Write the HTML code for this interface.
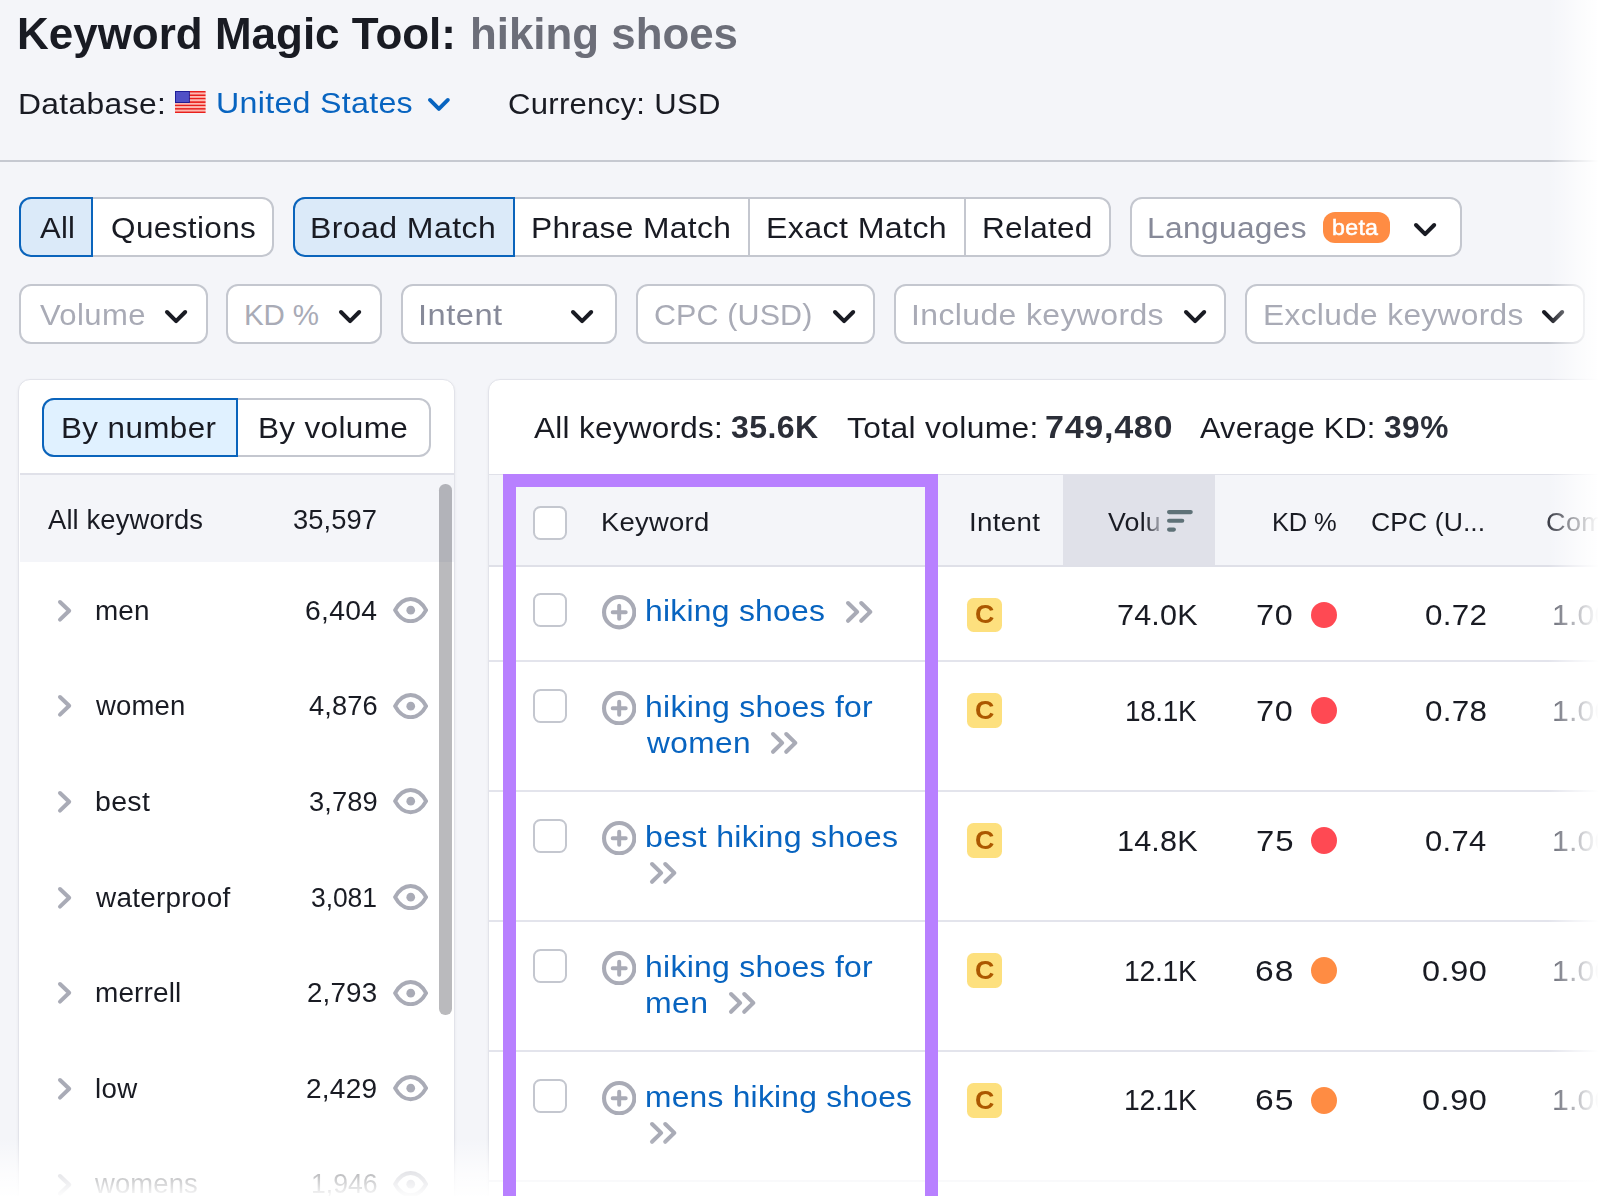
<!DOCTYPE html>
<html lang="en"><head><meta charset="utf-8"><title>Keyword Magic Tool: hiking shoes</title>
<style>
html,body{margin:0;padding:0;}
body{width:1600px;height:1196px;overflow:hidden;background:#f4f5f9;position:relative;font-family:"Liberation Sans", Arial, sans-serif;}
.a{position:absolute;}
.t{position:absolute;white-space:pre;line-height:1;margin:0;padding:0;transform-origin:0 0;}
</style></head><body>
<svg class="a" style="left:175.2px;top:91px" width="30.6" height="22.2" viewBox="0 0 30.6 22.2"><rect x="0" y="0.000" width="30.6" height="1.758" fill="#e9201c"/><rect x="0" y="1.708" width="30.6" height="1.758" fill="#ffb9b0"/><rect x="0" y="3.415" width="30.6" height="1.758" fill="#e9201c"/><rect x="0" y="5.123" width="30.6" height="1.758" fill="#ffb9b0"/><rect x="0" y="6.831" width="30.6" height="1.758" fill="#e9201c"/><rect x="0" y="8.538" width="30.6" height="1.758" fill="#ffb9b0"/><rect x="0" y="10.246" width="30.6" height="1.758" fill="#e9201c"/><rect x="0" y="11.954" width="30.6" height="1.758" fill="#ffb9b0"/><rect x="0" y="13.662" width="30.6" height="1.758" fill="#e9201c"/><rect x="0" y="15.369" width="30.6" height="1.758" fill="#ffb9b0"/><rect x="0" y="17.077" width="30.6" height="1.758" fill="#e9201c"/><rect x="0" y="18.785" width="30.6" height="1.758" fill="#ffb9b0"/><rect x="0" y="20.492" width="30.6" height="1.758" fill="#e9201c"/><rect x="0" y="0" width="14.84" height="11.95" fill="#1a1a96"/><rect x="0.9" y="0.9" width="13.04" height="10.15" fill="#5050c6"/></svg>
<svg class="a" style="left:428.00px;top:97.50px;overflow:visible" width="21.8" height="12.8" viewBox="0 0 21.8 12.8"><path d="M1.95 1.95 L10.9 10.850000000000001 L19.85 1.95" fill="none" stroke="#0864c0" stroke-width="3.9" stroke-linecap="round" stroke-linejoin="round"/></svg>
<div class="a" style="left:0px;top:160px;width:1600px;height:2px;background:#c6c9d1;"></div>
<div class="a" style="left:19px;top:197px;width:255px;height:60px;background:#fff;border:2px solid #c4c7cf;box-sizing:border-box;border-radius:12px;"></div>
<div class="a" style="left:19px;top:197px;width:74px;height:60px;background:#dbeaf9;border:2px solid #0a64bc;box-sizing:border-box;border-radius:12px 0 0 12px;"></div>
<div class="a" style="left:293px;top:197px;width:818px;height:60px;background:#fff;border:2px solid #c4c7cf;box-sizing:border-box;border-radius:12px;"></div>
<div class="a" style="left:293px;top:197px;width:222px;height:60px;background:#dbeaf9;border:2px solid #0a64bc;box-sizing:border-box;border-radius:12px 0 0 12px;"></div>
<div class="a" style="left:748px;top:199px;width:2px;height:56px;background:#c4c7cf;"></div>
<div class="a" style="left:964px;top:199px;width:2px;height:56px;background:#c4c7cf;"></div>
<div class="a" style="left:1130px;top:197px;width:332px;height:60px;background:#fff;border:2px solid #c4c7cf;box-sizing:border-box;border-radius:12px;"></div>
<div class="a" style="left:1323px;top:212px;width:67px;height:31px;background:#ff8c43;border-radius:12px;"></div>
<svg class="a" style="left:1413.60px;top:223.10px;overflow:visible" width="22.2" height="13.1" viewBox="0 0 22.2 13.1"><path d="M2.0 2.0 L11.1 11.1 L20.2 2.0" fill="none" stroke="#191b23" stroke-width="4.0" stroke-linecap="round" stroke-linejoin="round"/></svg>
<div class="a" style="left:19px;top:284px;width:189px;height:60px;background:#fff;border:2px solid #c4c7cf;box-sizing:border-box;border-radius:12px;"></div>
<svg class="a" style="left:164.70px;top:309.90px;overflow:visible" width="22.2" height="13.1" viewBox="0 0 22.2 13.1"><path d="M2.0 2.0 L11.1 11.1 L20.2 2.0" fill="none" stroke="#191b23" stroke-width="4.0" stroke-linecap="round" stroke-linejoin="round"/></svg>
<div class="a" style="left:226px;top:284px;width:156px;height:60px;background:#fff;border:2px solid #c4c7cf;box-sizing:border-box;border-radius:12px;"></div>
<svg class="a" style="left:339.30px;top:309.90px;overflow:visible" width="22.2" height="13.1" viewBox="0 0 22.2 13.1"><path d="M2.0 2.0 L11.1 11.1 L20.2 2.0" fill="none" stroke="#191b23" stroke-width="4.0" stroke-linecap="round" stroke-linejoin="round"/></svg>
<div class="a" style="left:401px;top:284px;width:216px;height:60px;background:#fff;border:2px solid #c4c7cf;box-sizing:border-box;border-radius:12px;"></div>
<svg class="a" style="left:570.50px;top:309.90px;overflow:visible" width="22.2" height="13.1" viewBox="0 0 22.2 13.1"><path d="M2.0 2.0 L11.1 11.1 L20.2 2.0" fill="none" stroke="#191b23" stroke-width="4.0" stroke-linecap="round" stroke-linejoin="round"/></svg>
<div class="a" style="left:636px;top:284px;width:239px;height:60px;background:#fff;border:2px solid #c4c7cf;box-sizing:border-box;border-radius:12px;"></div>
<svg class="a" style="left:832.60px;top:309.90px;overflow:visible" width="22.2" height="13.1" viewBox="0 0 22.2 13.1"><path d="M2.0 2.0 L11.1 11.1 L20.2 2.0" fill="none" stroke="#191b23" stroke-width="4.0" stroke-linecap="round" stroke-linejoin="round"/></svg>
<div class="a" style="left:894px;top:284px;width:332px;height:60px;background:#fff;border:2px solid #c4c7cf;box-sizing:border-box;border-radius:12px;"></div>
<svg class="a" style="left:1183.60px;top:309.90px;overflow:visible" width="22.2" height="13.1" viewBox="0 0 22.2 13.1"><path d="M2.0 2.0 L11.1 11.1 L20.2 2.0" fill="none" stroke="#191b23" stroke-width="4.0" stroke-linecap="round" stroke-linejoin="round"/></svg>
<div class="a" style="left:1245px;top:284px;width:340px;height:60px;background:#fff;border:2px solid #c4c7cf;box-sizing:border-box;border-radius:12px;"></div>
<svg class="a" style="left:1542.00px;top:309.90px;overflow:visible" width="22.2" height="13.1" viewBox="0 0 22.2 13.1"><path d="M2.0 2.0 L11.1 11.1 L20.2 2.0" fill="none" stroke="#191b23" stroke-width="4.0" stroke-linecap="round" stroke-linejoin="round"/></svg>
<div class="a" style="left:18px;top:379px;width:437px;height:921px;background:#fff;border:1px solid #e2e3ea;box-sizing:border-box;border-radius:12px;box-shadow:0 1px 3px rgba(25,27,35,0.06);"></div>
<div class="a" style="left:42px;top:398px;width:389px;height:59px;background:#fff;border:2px solid #c4c7cf;box-sizing:border-box;border-radius:12px;"></div>
<div class="a" style="left:42px;top:398px;width:196px;height:59px;background:#e0f1ff;border:2px solid #0a64bc;box-sizing:border-box;border-radius:12px 0 0 12px;"></div>
<div class="a" style="left:20px;top:473px;width:434px;height:2px;background:#e0e1e9;"></div>
<div class="a" style="left:20px;top:475px;width:434px;height:87px;background:#f4f5f9;"></div>
<svg class="a" style="left:58.05px;top:599.60px;overflow:visible" width="13.2" height="21.6" viewBox="0 0 13.2 21.6"><path d="M2.0 2.0 L11.2 10.8 L2.0 19.6" fill="none" stroke="#a9abb6" stroke-width="4.0" stroke-linecap="round" stroke-linejoin="round"/></svg>
<svg class="a" style="left:392.80px;top:597.00px" width="35.2" height="26.2" viewBox="0 0 35.2 26.2"><path d="M2.1 13.1 C6.2 5.6 11.6 2 17.6 2 C23.6 2 29 5.6 33.1 13.1 C29 20.6 23.6 24.2 17.6 24.2 C11.6 24.2 6.2 20.6 2.1 13.1 Z" fill="none" stroke="#a9abb6" stroke-width="4" stroke-linejoin="round"/><circle cx="17.75" cy="13.2" r="4.35" fill="#a9abb6"/></svg>
<svg class="a" style="left:58.05px;top:695.27px;overflow:visible" width="13.2" height="21.6" viewBox="0 0 13.2 21.6"><path d="M2.0 2.0 L11.2 10.8 L2.0 19.6" fill="none" stroke="#a9abb6" stroke-width="4.0" stroke-linecap="round" stroke-linejoin="round"/></svg>
<svg class="a" style="left:392.80px;top:692.67px" width="35.2" height="26.2" viewBox="0 0 35.2 26.2"><path d="M2.1 13.1 C6.2 5.6 11.6 2 17.6 2 C23.6 2 29 5.6 33.1 13.1 C29 20.6 23.6 24.2 17.6 24.2 C11.6 24.2 6.2 20.6 2.1 13.1 Z" fill="none" stroke="#a9abb6" stroke-width="4" stroke-linejoin="round"/><circle cx="17.75" cy="13.2" r="4.35" fill="#a9abb6"/></svg>
<svg class="a" style="left:58.05px;top:790.94px;overflow:visible" width="13.2" height="21.6" viewBox="0 0 13.2 21.6"><path d="M2.0 2.0 L11.2 10.8 L2.0 19.6" fill="none" stroke="#a9abb6" stroke-width="4.0" stroke-linecap="round" stroke-linejoin="round"/></svg>
<svg class="a" style="left:392.80px;top:788.34px" width="35.2" height="26.2" viewBox="0 0 35.2 26.2"><path d="M2.1 13.1 C6.2 5.6 11.6 2 17.6 2 C23.6 2 29 5.6 33.1 13.1 C29 20.6 23.6 24.2 17.6 24.2 C11.6 24.2 6.2 20.6 2.1 13.1 Z" fill="none" stroke="#a9abb6" stroke-width="4" stroke-linejoin="round"/><circle cx="17.75" cy="13.2" r="4.35" fill="#a9abb6"/></svg>
<svg class="a" style="left:58.05px;top:886.61px;overflow:visible" width="13.2" height="21.6" viewBox="0 0 13.2 21.6"><path d="M2.0 2.0 L11.2 10.8 L2.0 19.6" fill="none" stroke="#a9abb6" stroke-width="4.0" stroke-linecap="round" stroke-linejoin="round"/></svg>
<svg class="a" style="left:392.80px;top:884.01px" width="35.2" height="26.2" viewBox="0 0 35.2 26.2"><path d="M2.1 13.1 C6.2 5.6 11.6 2 17.6 2 C23.6 2 29 5.6 33.1 13.1 C29 20.6 23.6 24.2 17.6 24.2 C11.6 24.2 6.2 20.6 2.1 13.1 Z" fill="none" stroke="#a9abb6" stroke-width="4" stroke-linejoin="round"/><circle cx="17.75" cy="13.2" r="4.35" fill="#a9abb6"/></svg>
<svg class="a" style="left:58.05px;top:982.28px;overflow:visible" width="13.2" height="21.6" viewBox="0 0 13.2 21.6"><path d="M2.0 2.0 L11.2 10.8 L2.0 19.6" fill="none" stroke="#a9abb6" stroke-width="4.0" stroke-linecap="round" stroke-linejoin="round"/></svg>
<svg class="a" style="left:392.80px;top:979.68px" width="35.2" height="26.2" viewBox="0 0 35.2 26.2"><path d="M2.1 13.1 C6.2 5.6 11.6 2 17.6 2 C23.6 2 29 5.6 33.1 13.1 C29 20.6 23.6 24.2 17.6 24.2 C11.6 24.2 6.2 20.6 2.1 13.1 Z" fill="none" stroke="#a9abb6" stroke-width="4" stroke-linejoin="round"/><circle cx="17.75" cy="13.2" r="4.35" fill="#a9abb6"/></svg>
<svg class="a" style="left:58.05px;top:1077.95px;overflow:visible" width="13.2" height="21.6" viewBox="0 0 13.2 21.6"><path d="M2.0 2.0 L11.2 10.8 L2.0 19.6" fill="none" stroke="#a9abb6" stroke-width="4.0" stroke-linecap="round" stroke-linejoin="round"/></svg>
<svg class="a" style="left:392.80px;top:1075.35px" width="35.2" height="26.2" viewBox="0 0 35.2 26.2"><path d="M2.1 13.1 C6.2 5.6 11.6 2 17.6 2 C23.6 2 29 5.6 33.1 13.1 C29 20.6 23.6 24.2 17.6 24.2 C11.6 24.2 6.2 20.6 2.1 13.1 Z" fill="none" stroke="#a9abb6" stroke-width="4" stroke-linejoin="round"/><circle cx="17.75" cy="13.2" r="4.35" fill="#a9abb6"/></svg>
<svg class="a" style="left:58.05px;top:1173.62px;overflow:visible" width="13.2" height="21.6" viewBox="0 0 13.2 21.6"><path d="M2.0 2.0 L11.2 10.8 L2.0 19.6" fill="none" stroke="#a9abb6" stroke-width="4.0" stroke-linecap="round" stroke-linejoin="round"/></svg>
<svg class="a" style="left:392.80px;top:1171.02px" width="35.2" height="26.2" viewBox="0 0 35.2 26.2"><path d="M2.1 13.1 C6.2 5.6 11.6 2 17.6 2 C23.6 2 29 5.6 33.1 13.1 C29 20.6 23.6 24.2 17.6 24.2 C11.6 24.2 6.2 20.6 2.1 13.1 Z" fill="none" stroke="#a9abb6" stroke-width="4" stroke-linejoin="round"/><circle cx="17.75" cy="13.2" r="4.35" fill="#a9abb6"/></svg>
<div class="a" style="left:439px;top:484px;width:13px;height:531px;background:rgba(25,27,35,0.3);border-radius:6.25px;"></div>
<div class="a" style="left:488px;top:379px;width:1212px;height:921px;background:#fff;border:1px solid #e2e3ea;box-sizing:border-box;border-radius:12px;box-shadow:0 1px 3px rgba(25,27,35,0.06);"></div>
<div class="a" style="left:489px;top:474px;width:1111px;height:92px;background:#f4f5f9;"></div>
<div class="a" style="left:489px;top:474px;width:1111px;height:1px;background:#e0e1e9;"></div>
<div class="a" style="left:1063px;top:475px;width:152px;height:90px;background:#e0e1e9;"></div>
<div class="a" style="left:489px;top:565px;width:1111px;height:2px;background:#dfe0e8;"></div>
<svg class="a" style="left:1167.10px;top:510.20px" width="26" height="22" viewBox="0 0 26 22"><g stroke="#5f7278" stroke-width="4.1" stroke-linecap="round"><path d="M2.05 2.1 H23.75"/><path d="M2.05 10.8 H15.25"/><path d="M2.05 19.6 H6.85"/></g></svg>
<div class="a" style="left:533px;top:506px;width:34px;height:34px;background:#fff;border:2px solid #c4c7cf;box-sizing:border-box;border-radius:7.5px;"></div>
<div class="a" style="left:533px;top:593px;width:34px;height:34px;background:#fff;border:2px solid #c4c7cf;box-sizing:border-box;border-radius:7.5px;"></div>
<svg class="a" style="left:602.00px;top:595.20px" width="34.4" height="34.4" viewBox="0 0 34.4 34.4"><circle cx="17.2" cy="17.2" r="15.149999999999999" fill="none" stroke="#a9abb6" stroke-width="4.1"/><path d="M17.2 10.7 V23.7 M10.7 17.2 H23.7" stroke="#a9abb6" stroke-width="4" stroke-linecap="round" fill="none"/></svg>
<svg class="a" style="left:846.30px;top:600.50px;overflow:visible" width="26.4" height="21.8" viewBox="0 0 26.4 21.8"><path d="M2.05 2.05 L11.149999999999999 10.9 L2.05 19.75 M15.25 2.05 L24.349999999999998 10.9 L15.25 19.75" fill="none" stroke="#a9abb6" stroke-width="4.1" stroke-linecap="round" stroke-linejoin="round"/></svg>
<div class="a" style="left:967px;top:598px;width:35px;height:34px;background:#fde07e;border-radius:6.5px;"></div>
<div class="a" style="left:1311px;top:602px;width:26px;height:26px;background:#ff4953;border-radius:50%;"></div>
<div class="a" style="left:489px;top:660px;width:1111px;height:2px;background:#e3e4ec;"></div>
<div class="a" style="left:533px;top:689px;width:34px;height:34px;background:#fff;border:2px solid #c4c7cf;box-sizing:border-box;border-radius:7.5px;"></div>
<svg class="a" style="left:602.00px;top:690.70px" width="34.4" height="34.4" viewBox="0 0 34.4 34.4"><circle cx="17.2" cy="17.2" r="15.149999999999999" fill="none" stroke="#a9abb6" stroke-width="4.1"/><path d="M17.2 10.7 V23.7 M10.7 17.2 H23.7" stroke="#a9abb6" stroke-width="4" stroke-linecap="round" fill="none"/></svg>
<svg class="a" style="left:771.10px;top:732.40px;overflow:visible" width="26.4" height="21.8" viewBox="0 0 26.4 21.8"><path d="M2.05 2.05 L11.149999999999999 10.9 L2.05 19.75 M15.25 2.05 L24.349999999999998 10.9 L15.25 19.75" fill="none" stroke="#a9abb6" stroke-width="4.1" stroke-linecap="round" stroke-linejoin="round"/></svg>
<div class="a" style="left:967px;top:693px;width:35px;height:35px;background:#fde07e;border-radius:6.5px;"></div>
<div class="a" style="left:1311px;top:697px;width:26px;height:27px;background:#ff4953;border-radius:50%;"></div>
<div class="a" style="left:489px;top:790px;width:1111px;height:2px;background:#e3e4ec;"></div>
<div class="a" style="left:533px;top:819px;width:34px;height:34px;background:#fff;border:2px solid #c4c7cf;box-sizing:border-box;border-radius:7.5px;"></div>
<svg class="a" style="left:602.00px;top:820.70px" width="34.4" height="34.4" viewBox="0 0 34.4 34.4"><circle cx="17.2" cy="17.2" r="15.149999999999999" fill="none" stroke="#a9abb6" stroke-width="4.1"/><path d="M17.2 10.7 V23.7 M10.7 17.2 H23.7" stroke="#a9abb6" stroke-width="4" stroke-linecap="round" fill="none"/></svg>
<svg class="a" style="left:649.70px;top:862.40px;overflow:visible" width="26.4" height="21.8" viewBox="0 0 26.4 21.8"><path d="M2.05 2.05 L11.149999999999999 10.9 L2.05 19.75 M15.25 2.05 L24.349999999999998 10.9 L15.25 19.75" fill="none" stroke="#a9abb6" stroke-width="4.1" stroke-linecap="round" stroke-linejoin="round"/></svg>
<div class="a" style="left:967px;top:823px;width:35px;height:35px;background:#fde07e;border-radius:6.5px;"></div>
<div class="a" style="left:1311px;top:827px;width:26px;height:27px;background:#ff4953;border-radius:50%;"></div>
<div class="a" style="left:489px;top:920px;width:1111px;height:2px;background:#e3e4ec;"></div>
<div class="a" style="left:533px;top:949px;width:34px;height:34px;background:#fff;border:2px solid #c4c7cf;box-sizing:border-box;border-radius:7.5px;"></div>
<svg class="a" style="left:602.00px;top:950.70px" width="34.4" height="34.4" viewBox="0 0 34.4 34.4"><circle cx="17.2" cy="17.2" r="15.149999999999999" fill="none" stroke="#a9abb6" stroke-width="4.1"/><path d="M17.2 10.7 V23.7 M10.7 17.2 H23.7" stroke="#a9abb6" stroke-width="4" stroke-linecap="round" fill="none"/></svg>
<svg class="a" style="left:728.60px;top:992.40px;overflow:visible" width="26.4" height="21.8" viewBox="0 0 26.4 21.8"><path d="M2.05 2.05 L11.149999999999999 10.9 L2.05 19.75 M15.25 2.05 L24.349999999999998 10.9 L15.25 19.75" fill="none" stroke="#a9abb6" stroke-width="4.1" stroke-linecap="round" stroke-linejoin="round"/></svg>
<div class="a" style="left:967px;top:953px;width:35px;height:35px;background:#fde07e;border-radius:6.5px;"></div>
<div class="a" style="left:1311px;top:957px;width:26px;height:27px;background:#ff8c43;border-radius:50%;"></div>
<div class="a" style="left:489px;top:1050px;width:1111px;height:2px;background:#e3e4ec;"></div>
<div class="a" style="left:533px;top:1079px;width:34px;height:34px;background:#fff;border:2px solid #c4c7cf;box-sizing:border-box;border-radius:7.5px;"></div>
<svg class="a" style="left:602.00px;top:1080.70px" width="34.4" height="34.4" viewBox="0 0 34.4 34.4"><circle cx="17.2" cy="17.2" r="15.149999999999999" fill="none" stroke="#a9abb6" stroke-width="4.1"/><path d="M17.2 10.7 V23.7 M10.7 17.2 H23.7" stroke="#a9abb6" stroke-width="4" stroke-linecap="round" fill="none"/></svg>
<svg class="a" style="left:649.70px;top:1122.40px;overflow:visible" width="26.4" height="21.8" viewBox="0 0 26.4 21.8"><path d="M2.05 2.05 L11.149999999999999 10.9 L2.05 19.75 M15.25 2.05 L24.349999999999998 10.9 L15.25 19.75" fill="none" stroke="#a9abb6" stroke-width="4.1" stroke-linecap="round" stroke-linejoin="round"/></svg>
<div class="a" style="left:967px;top:1083px;width:35px;height:35px;background:#fde07e;border-radius:6.5px;"></div>
<div class="a" style="left:1311px;top:1087px;width:26px;height:27px;background:#ff8c43;border-radius:50%;"></div>
<div class="a" style="left:489px;top:1180px;width:1111px;height:2px;background:#e3e4ec;"></div>
<span class="t" style="left:17.20px;top:12.58px;font-size:43.5px;color:#191b23;font-weight:700;letter-spacing:0.014px;transform:scaleX(1.0104);">Keyword Magic Tool:</span>
<span class="t" style="left:470.03px;top:12.58px;font-size:43.5px;color:#6c6e79;font-weight:700;letter-spacing:0.008px;transform:scaleX(1.0074);">hiking shoes</span>
<span class="t" style="left:18.16px;top:89.03px;font-size:29.5px;color:#191b23;letter-spacing:0.302px;transform:scaleX(1.0795);">Database:</span>
<span class="t" style="left:215.80px;top:88.44px;font-size:30.2px;color:#0864c0;letter-spacing:0.282px;transform:scaleX(1.0654);">United States</span>
<span class="t" style="left:507.84px;top:89.03px;font-size:29.5px;color:#191b23;letter-spacing:0.274px;transform:scaleX(1.0530);">Currency: USD</span>
<span class="t" style="left:39.84px;top:213.03px;font-size:29.5px;color:#191b23;letter-spacing:0.251px;transform:scaleX(1.0519);">All</span>
<span class="t" style="left:110.82px;top:213.03px;font-size:29.5px;color:#191b23;letter-spacing:0.348px;transform:scaleX(1.0682);">Questions</span>
<span class="t" style="left:309.88px;top:213.03px;font-size:29.5px;color:#191b23;letter-spacing:0.379px;transform:scaleX(1.0857);">Broad Match</span>
<span class="t" style="left:531.02px;top:213.03px;font-size:29.5px;color:#191b23;letter-spacing:0.333px;transform:scaleX(1.0765);">Phrase Match</span>
<span class="t" style="left:765.61px;top:213.03px;font-size:29.5px;color:#191b23;letter-spacing:0.372px;transform:scaleX(1.0885);">Exact Match</span>
<span class="t" style="left:981.84px;top:213.03px;font-size:29.5px;color:#191b23;letter-spacing:0.259px;transform:scaleX(1.0694);">Related</span>
<span class="t" style="left:1146.82px;top:213.03px;font-size:29.5px;color:#878a99;letter-spacing:0.353px;transform:scaleX(1.0727);">Languages</span>
<span class="t" style="left:1332.33px;top:216.55px;font-size:21.8px;color:#fff;letter-spacing:0.274px;transform:scaleX(1.0643);-webkit-text-stroke:0.5px #fff;">beta</span>
<span class="t" style="left:39.83px;top:300.03px;font-size:29.5px;color:#a9abb6;letter-spacing:0.355px;transform:scaleX(1.0521);">Volume</span>
<span class="t" style="left:244.08px;top:300.03px;font-size:29.5px;color:#a9abb6;letter-spacing:-0.145px;">KD %</span>
<span class="t" style="left:417.78px;top:300.03px;font-size:29.5px;color:#878a99;letter-spacing:0.428px;transform:scaleX(1.1076);">Intent</span>
<span class="t" style="left:653.80px;top:300.03px;font-size:29.5px;color:#a9abb6;letter-spacing:0.137px;transform:scaleX(1.0315);">CPC (USD)</span>
<span class="t" style="left:910.81px;top:300.03px;font-size:29.5px;color:#a9abb6;letter-spacing:0.352px;transform:scaleX(1.0830);">Include keywords</span>
<span class="t" style="left:1262.82px;top:300.03px;font-size:29.5px;color:#a9abb6;letter-spacing:0.328px;transform:scaleX(1.0730);">Exclude keywords</span>
<span class="t" style="left:61.29px;top:412.83px;font-size:29.5px;color:#191b23;letter-spacing:0.357px;transform:scaleX(1.0649);">By number</span>
<span class="t" style="left:258.43px;top:412.83px;font-size:29.5px;color:#191b23;letter-spacing:0.315px;transform:scaleX(1.0679);">By volume</span>
<span class="t" style="left:47.97px;top:506.71px;font-size:26.8px;color:#191b23;letter-spacing:0.124px;transform:scaleX(1.0217);">All keywords</span>
<span class="t" style="left:292.98px;top:506.71px;font-size:26.8px;color:#191b23;letter-spacing:0.100px;transform:scaleX(1.0191);">35,597</span>
<span class="t" style="left:95.08px;top:598.21px;font-size:26.8px;color:#191b23;letter-spacing:0.132px;transform:scaleX(1.0404);">men</span>
<span class="t" style="left:304.94px;top:598.21px;font-size:26.8px;color:#191b23;letter-spacing:0.293px;transform:scaleX(1.0570);">6,404</span>
<span class="t" style="left:96.07px;top:692.88px;font-size:26.8px;color:#191b23;letter-spacing:0.178px;transform:scaleX(1.0259);">women</span>
<span class="t" style="left:308.78px;top:692.88px;font-size:26.8px;color:#191b23;letter-spacing:0.095px;transform:scaleX(1.0178);">4,876</span>
<span class="t" style="left:95.03px;top:788.55px;font-size:26.8px;color:#191b23;letter-spacing:0.318px;transform:scaleX(1.0625);">best</span>
<span class="t" style="left:308.78px;top:788.55px;font-size:26.8px;color:#191b23;letter-spacing:0.095px;transform:scaleX(1.0178);">3,789</span>
<span class="t" style="left:96.04px;top:885.22px;font-size:26.8px;color:#191b23;letter-spacing:0.252px;transform:scaleX(1.0412);">waterproof</span>
<span class="t" style="left:311.01px;top:885.22px;font-size:26.8px;color:#191b23;letter-spacing:-0.067px;transform:scaleX(0.9879);">3,081</span>
<span class="t" style="left:95.07px;top:979.89px;font-size:26.8px;color:#191b23;letter-spacing:0.114px;transform:scaleX(1.0437);">merrell</span>
<span class="t" style="left:307.47px;top:979.89px;font-size:26.8px;color:#191b23;letter-spacing:0.149px;transform:scaleX(1.0359);">2,793</span>
<span class="t" style="left:95.05px;top:1075.56px;font-size:26.8px;color:#191b23;letter-spacing:0.297px;transform:scaleX(1.0328);">low</span>
<span class="t" style="left:305.95px;top:1075.56px;font-size:26.8px;color:#191b23;letter-spacing:0.236px;transform:scaleX(1.0455);">2,429</span>
<span class="t" style="left:95.27px;top:1171.23px;font-size:26.8px;color:#191b23;letter-spacing:0.142px;transform:scaleX(1.0223);">womens</span>
<span class="t" style="left:310.50px;top:1171.23px;font-size:26.8px;color:#191b23;letter-spacing:-0.035px;transform:scaleX(0.9936);">1,946</span>
<span class="t" style="left:534.02px;top:412.83px;font-size:29.5px;color:#191b23;letter-spacing:0.281px;transform:scaleX(1.0659);">All keywords:</span>
<span class="t" style="left:730.58px;top:411.90px;font-size:30.6px;color:#2b2e38;font-weight:700;letter-spacing:0.402px;transform:scaleX(1.0470);">35.6K</span>
<span class="t" style="left:846.81px;top:412.83px;font-size:29.5px;color:#191b23;letter-spacing:0.319px;transform:scaleX(1.0774);">Total volume:</span>
<span class="t" style="left:1044.62px;top:411.90px;font-size:30.6px;color:#2b2e38;font-weight:700;letter-spacing:0.620px;transform:scaleX(1.1150);">749,480</span>
<span class="t" style="left:1199.85px;top:412.83px;font-size:29.5px;color:#191b23;letter-spacing:0.204px;transform:scaleX(1.0387);">Average KD:</span>
<span class="t" style="left:1383.79px;top:411.90px;font-size:30.6px;color:#2b2e38;font-weight:700;letter-spacing:0.483px;transform:scaleX(1.0352);">39%</span>
<span class="t" style="left:600.59px;top:510.36px;font-size:25.8px;color:#191b23;letter-spacing:0.245px;transform:scaleX(1.0632);">Keyword</span>
<span class="t" style="left:968.79px;top:510.36px;font-size:25.8px;color:#191b23;letter-spacing:0.297px;transform:scaleX(1.0765);">Intent</span>
<span class="t" style="left:1107.90px;top:510.36px;font-size:25.8px;color:#191b23;letter-spacing:0.194px;transform:scaleX(1.0375);background:linear-gradient(to right,#191b23 70%,#9a9ca6 96%);-webkit-background-clip:text;background-clip:text;color:transparent;">Volu</span>
<span class="t" style="left:1271.56px;top:510.36px;font-size:25.8px;color:#191b23;letter-spacing:-0.181px;transform:scaleX(0.9896);">KD %</span>
<span class="t" style="left:1370.69px;top:510.36px;font-size:25.8px;color:#191b23;letter-spacing:0.061px;transform:scaleX(1.0298);">CPC (U...</span>
<span class="t" style="left:1546.28px;top:510.36px;font-size:25.8px;color:#3a3c46;letter-spacing:0.317px;transform:scaleX(1.0502);">Com.</span>
<span class="t" style="left:644.71px;top:595.64px;font-size:30.2px;color:#0864c0;letter-spacing:0.243px;transform:scaleX(1.0557);">hiking shoes</span>
<span class="t" style="left:974.99px;top:602.26px;font-size:25.8px;color:#ac5800;font-weight:700;transform:scaleX(1.0402);">C</span>
<span class="t" style="left:1116.75px;top:599.87px;font-size:29.8px;color:#191b23;letter-spacing:0.191px;transform:scaleX(1.0244);">74.0K</span>
<span class="t" style="left:1256.20px;top:599.87px;font-size:29.8px;color:#191b23;letter-spacing:0.673px;transform:scaleX(1.0848);">70</span>
<span class="t" style="left:1424.72px;top:599.87px;font-size:29.8px;color:#191b23;letter-spacing:0.311px;transform:scaleX(1.0529);">0.72</span>
<span class="t" style="left:1551.86px;top:599.87px;font-size:29.8px;color:#5e606c;letter-spacing:0.101px;transform:scaleX(1.0166);">1.00</span>
<span class="t" style="left:644.70px;top:692.14px;font-size:30.2px;color:#0864c0;letter-spacing:0.254px;transform:scaleX(1.0578);">hiking shoes for</span>
<span class="t" style="left:646.71px;top:727.54px;font-size:30.2px;color:#0864c0;letter-spacing:0.389px;transform:scaleX(1.0474);">women</span>
<span class="t" style="left:974.99px;top:697.76px;font-size:25.8px;color:#ac5800;font-weight:700;transform:scaleX(1.0402);">C</span>
<span class="t" style="left:1124.95px;top:696.37px;font-size:29.8px;color:#191b23;letter-spacing:-0.409px;transform:scaleX(0.9391);">18.1K</span>
<span class="t" style="left:1256.20px;top:696.37px;font-size:29.8px;color:#191b23;letter-spacing:0.673px;transform:scaleX(1.0848);">70</span>
<span class="t" style="left:1424.72px;top:696.37px;font-size:29.8px;color:#191b23;letter-spacing:0.311px;transform:scaleX(1.0529);">0.78</span>
<span class="t" style="left:1551.86px;top:696.37px;font-size:29.8px;color:#5e606c;letter-spacing:0.101px;transform:scaleX(1.0166);">1.00</span>
<span class="t" style="left:644.70px;top:822.14px;font-size:30.2px;color:#0864c0;letter-spacing:0.277px;transform:scaleX(1.0644);">best hiking shoes</span>
<span class="t" style="left:974.99px;top:827.76px;font-size:25.8px;color:#ac5800;font-weight:700;transform:scaleX(1.0402);">C</span>
<span class="t" style="left:1116.76px;top:826.37px;font-size:29.8px;color:#191b23;letter-spacing:0.132px;transform:scaleX(1.0276);">14.8K</span>
<span class="t" style="left:1256.49px;top:826.37px;font-size:29.8px;color:#191b23;letter-spacing:0.781px;transform:scaleX(1.1023);">75</span>
<span class="t" style="left:1424.83px;top:826.37px;font-size:29.8px;color:#191b23;letter-spacing:0.289px;transform:scaleX(1.0384);">0.74</span>
<span class="t" style="left:1551.86px;top:826.37px;font-size:29.8px;color:#5e606c;letter-spacing:0.101px;transform:scaleX(1.0166);">1.00</span>
<span class="t" style="left:644.70px;top:952.14px;font-size:30.2px;color:#0864c0;letter-spacing:0.254px;transform:scaleX(1.0578);">hiking shoes for</span>
<span class="t" style="left:644.73px;top:987.54px;font-size:30.2px;color:#0864c0;letter-spacing:0.318px;transform:scaleX(1.0607);">men</span>
<span class="t" style="left:974.99px;top:957.76px;font-size:25.8px;color:#ac5800;font-weight:700;transform:scaleX(1.0402);">C</span>
<span class="t" style="left:1123.84px;top:956.37px;font-size:29.8px;color:#191b23;letter-spacing:-0.318px;transform:scaleX(0.9520);">12.1K</span>
<span class="t" style="left:1255.26px;top:956.37px;font-size:29.8px;color:#191b23;letter-spacing:1.030px;transform:scaleX(1.1269);">68</span>
<span class="t" style="left:1421.78px;top:956.37px;font-size:29.8px;color:#191b23;letter-spacing:0.508px;transform:scaleX(1.0892);">0.90</span>
<span class="t" style="left:1551.86px;top:956.37px;font-size:29.8px;color:#5e606c;letter-spacing:0.101px;transform:scaleX(1.0166);">1.00</span>
<span class="t" style="left:644.71px;top:1082.14px;font-size:30.2px;color:#0864c0;letter-spacing:0.239px;transform:scaleX(1.0517);">mens hiking shoes</span>
<span class="t" style="left:974.99px;top:1087.76px;font-size:25.8px;color:#ac5800;font-weight:700;transform:scaleX(1.0402);">C</span>
<span class="t" style="left:1123.84px;top:1085.37px;font-size:29.8px;color:#191b23;letter-spacing:-0.318px;transform:scaleX(0.9520);">12.1K</span>
<span class="t" style="left:1255.26px;top:1085.37px;font-size:29.8px;color:#191b23;letter-spacing:1.030px;transform:scaleX(1.1269);">65</span>
<span class="t" style="left:1421.78px;top:1085.37px;font-size:29.8px;color:#191b23;letter-spacing:0.508px;transform:scaleX(1.0892);">0.90</span>
<span class="t" style="left:1551.86px;top:1085.37px;font-size:29.8px;color:#5e606c;letter-spacing:0.101px;transform:scaleX(1.0166);">1.00</span>
<div class="a" style="left:1548px;top:0;width:52px;height:1196px;background:linear-gradient(to right,rgba(255,255,255,0),rgba(255,255,255,0.55) 50%,#fff 97%);"></div>
<div class="a" style="left:0;top:1138px;width:1600px;height:58px;background:linear-gradient(to bottom,rgba(255,255,255,0),rgba(255,255,255,0.7) 60%,rgba(255,255,255,0.97));"></div>
<div class="a" style="left:503px;top:474px;width:435px;height:800px;border:13px solid #b880ff;box-sizing:border-box;"></div>
</body></html>
